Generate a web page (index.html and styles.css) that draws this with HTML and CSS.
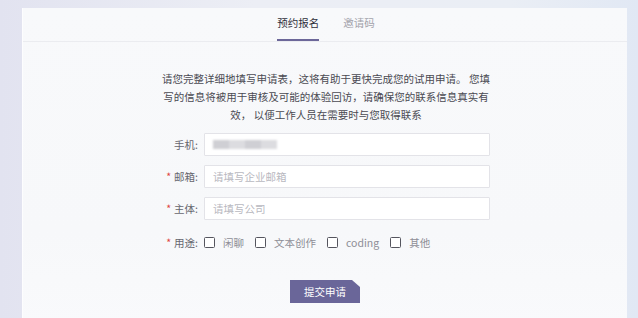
FILE: index.html
```html
<!DOCTYPE html>
<html lang="zh-CN">
<head>
<meta charset="utf-8">
<title>预约报名</title>
<link rel="stylesheet" href="styles.css">
</head>
<body>
<div class="card">
  <div class="tabs">
    <div class="tab active">预约报名</div>
    <div class="tab">邀请码</div>
  </div>
  <p class="intro">请您完整详细地填写申请表，这将有助于更快完成您的试用申请。 您填写的信息将被用于审核及可能的体验回访，请确保您的联系信息真实有效， 以便工作人员在需要时与您取得联系</p>
  <form class="form">
    <div class="row">
      <label class="label">手机:</label>
      <div class="input"><span class="masked"><i></i><i class="b"></i><i></i><i class="b"></i></span></div>
    </div>
    <div class="row">
      <label class="label"><span class="req">*</span>邮箱:</label>
      <div class="input placeholder">请填写企业邮箱</div>
    </div>
    <div class="row">
      <label class="label"><span class="req">*</span>主体:</label>
      <div class="input placeholder">请填写公司</div>
    </div>
    <div class="row checks">
      <label class="label"><span class="req">*</span>用途:</label>
      <div class="options">
        <span class="opt"><span class="box"></span>闲聊</span>
        <span class="opt"><span class="box"></span>文本创作</span>
        <span class="opt"><span class="box"></span>coding</span>
        <span class="opt"><span class="box"></span>其他</span>
      </div>
    </div>
  </form>
  <div class="actions">
    <button class="submit" type="button">提交申请</button>
  </div>
</div>
</body>
</html>
```
FILE: styles.css
```css
* { box-sizing: border-box; }
html, body { height: 100%; }
body {
  margin: 0;
  overflow: hidden;
  font-family: "Noto Sans CJK SC", "Noto Sans", sans-serif;
  font-size: 10.5px;
  background: linear-gradient(90deg, #e2e3f0 0%, #eceef5 40%, #eaeef5 80%, #e1e8f4 100%);
}
.card {
  margin: 8px 11px 0 22px;
  height: 320px;
  background: linear-gradient(180deg, #f8f9fb 0%, #f7f8fa 70%, #f9fafc 100%);
  border-left: 1px solid #fdfdfe;
}
.tabs {
  display: flex;
  justify-content: center;
  gap: 24px;
  height: 34px;
  border-bottom: 1px solid #ebecf0;
  padding-left: 2px;
}
.tab {
  padding-top: 8px;
  height: 33px;
  line-height: 14px;
  color: #a3a3ab;
  border-bottom: 2px solid transparent;
}
.tab.active {
  color: #2f2f3a;
  border-bottom-color: #6c6799;
}
.intro {
  width: 332px;
  margin: 28px auto 0;
  text-align: center;
  line-height: 18px;
  color: #4a4a52;
  padding-left: 2px;
}
.form {
  margin: 9px 0 0 120px;
  display: flex;
  flex-direction: column;
  gap: 9px;
}
.row {
  display: flex;
  align-items: center;
  height: 23px;
}
.row.checks { margin-top: 2px; }
.label {
  width: 61px;
  text-align: right;
  color: #66666e;
  padding-right: 6px;
  white-space: nowrap;
}
.req {
  color: #e0463e;
  margin-right: 3px;
}
.input {
  width: 286px;
  height: 23px;
  border: 1px solid #e3e3e8;
  background: #ffffff;
  border-radius: 1px;
  padding-left: 8px;
  display: flex;
  align-items: center;
  color: #333;
}
.input.placeholder { color: #b8b8c0; }
.masked {
  display: flex;
  filter: blur(1.2px);
}
.masked i {
  display: block;
  width: 16px;
  height: 9px;
  background: #cfcfd4;
}
.masked i.b { background: #dcdce0; }
.options {
  display: flex;
  align-items: center;
  gap: 11px;
}
.opt {
  display: flex;
  align-items: center;
  gap: 8px;
  color: #8e8e96;
}
.box {
  width: 11px;
  height: 11px;
  border: 1px solid #55555e;
  border-radius: 1.5px;
  background: #fff;
}
.actions {
  display: flex;
  justify-content: center;
  margin-top: 26px;
}
.submit {
  width: 70px;
  height: 23px;
  border: 0;
  padding: 0;
  background: #6a6699;
  color: #fff;
  font-family: inherit;
  font-size: 10.5px;
  clip-path: polygon(0 0, 62px 0, 70px 7px, 70px 100%, 0 100%);
}
```
